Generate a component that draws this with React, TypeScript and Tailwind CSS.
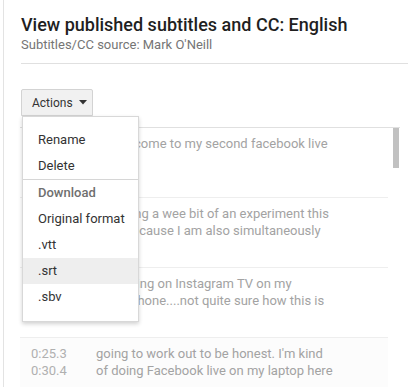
import React from "react";

type Row = { t1: string; t2: string; l1: string; l2: string; hover?: boolean };

const rows: Row[] = [
  { t1: "0:00.0", t2: "0:04.5", l1: "Hi, welcome to my second facebook live", l2: "" },
  { t1: "0:04.5", t2: "0:10.1", l1: "I'm doing a wee bit of an experiment this", l2: "time because I am also simultaneously" },
  { t1: "0:10.1", t2: "0:25.3", l1: "streaming on Instagram TV on my", l2: "smartphone....not quite sure how this is" },
  { t1: "0:25.3", t2: "0:30.4", l1: "going to work out to be honest. I'm kind", l2: "of doing Facebook live on my laptop here", hover: true },
];

export default function App() {
  return (
    <div className="w-[408px] h-[387px] overflow-hidden bg-white font-['Roboto',sans-serif]">
      <div className="relative ml-[3px] h-full border-l border-[#e3e3e3] pl-[17px]">
        <h1 className="pt-[13px] text-[18px] leading-[23px] font-medium text-[#1f1f1f] whitespace-nowrap">
          View published subtitles and CC: English
        </h1>
        <div className="text-[13px] leading-[17px] text-[#757575] whitespace-nowrap">
          Subtitles/CC source: Mark O'Neill
        </div>
        <div className="mt-[10px] border-t border-[#e0e0e0]" />

        <button className="mt-[25px] flex h-[27px] w-[72px] items-center gap-[6px] rounded-t-[2px] border border-[#d3d3d3] bg-[#f1f1f1] pl-[10px] text-[12px] text-[#333]">
          <span>Actions</span>
          <svg width="8" height="5" viewBox="0 0 8 5">
            <polygon points="0,0 8,0 4,4.5" fill="#333" />
          </svg>
        </button>

        <div className="ml-[-1px] mt-[11px] mr-[8px] flex border-t border-[#e0e0e0]">
          <div className="w-[368px]">
            {rows.map((r, i) => (
              <div
                key={i}
                className={`flex h-[70px] border-b border-[#eeeeee] pl-[11px] pt-[7px] text-[13px] leading-[17px] ${r.hover ? "bg-[#fcfcfc]" : ""}`}
              >
                <div className="w-[65px] text-[#b0b0b0]">
                  <div>{r.t1}</div>
                  <div>{r.t2}</div>
                </div>
                <div className="text-[#a3a3a3] whitespace-nowrap">
                  <div>{r.l1}</div>
                  <div>{r.l2}</div>
                </div>
              </div>
            ))}
          </div>
          <div className="flex w-[11px] justify-end">
            <div className="h-[40px] w-[6px] bg-[#c1c1c1]" />
          </div>
        </div>

        <div className="absolute left-[18px] top-[116px] w-[117px] border border-[#d8d8d8] bg-white pt-[10px] pb-[11px] text-[13px] text-[#333] shadow-[0_2px_4px_rgba(0,0,0,0.18)]">
          <div className="h-[26px] pl-[15px] leading-[26px]">Rename</div>
          <div className="h-[26px] pl-[15px] leading-[26px]">Delete</div>
          <div className="border-t border-[#d6d6d6]" />
          <div className="h-[26px] pl-[15px] leading-[26px] font-medium text-[#6f6f6f]">Download</div>
          <div className="h-[26px] pl-[15px] leading-[26px]">Original format</div>
          <div className="h-[26px] pl-[15px] leading-[26px]">.vtt</div>
          <div className="h-[26px] pl-[15px] leading-[26px] bg-[#eeeeee]">.srt</div>
          <div className="h-[26px] pl-[15px] leading-[26px]">.sbv</div>
        </div>
      </div>
    </div>
  );
}
